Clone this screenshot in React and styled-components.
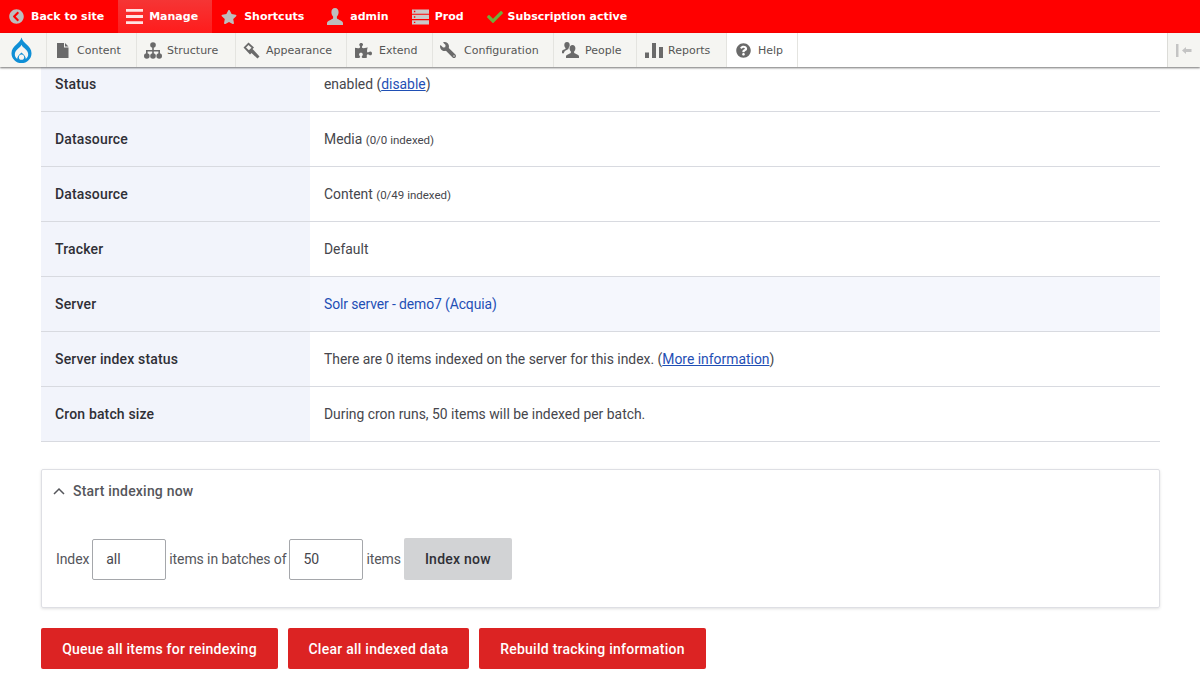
import React from 'react';
import styled, { createGlobalStyle } from 'styled-components';
import { FaStar, FaCheck, FaPuzzlePiece, FaWrench, FaQuestionCircle, FaChevronCircleLeft } from 'react-icons/fa';

const GlobalStyle = createGlobalStyle`
    html, body {
        margin: 0;
        padding: 0;
        height: 685px;
        overflow: hidden;
        background: #fff;
    }
    body {
        font-family: Roboto, "Noto Sans", sans-serif;
        color: #4a4a4f;
    }
    * {
        box-sizing: border-box;
    }
`;

const Header = styled.header`
    position: relative;
    z-index: 2;
`;

const TopBar = styled.nav`
    display: flex;
    height: 33px;
    background: #ff0000;
    font-family: "DejaVu Sans", sans-serif;
    font-size: 11px;
    font-weight: 700;
    color: #fff;
`;

const TopItem = styled.div`
    display: flex;
    align-items: center;
    gap: ${(p) => p.$gap || 7}px;
    padding: 0 14px 0 ${(p) => p.$left || 9}px;
    background: ${(p) => (p.$active ? 'linear-gradient(#f53535, #ff1c1c)' : 'transparent')};
    white-space: nowrap;
    svg {
        flex: none;
        color: #bdbdbd;
    }
`;

const MenuBar = styled.nav`
    display: flex;
    align-items: stretch;
    height: 34px;
    background: #fff;
    font-family: "DejaVu Sans", sans-serif;
    font-size: 11px;
    color: #555;
    box-shadow: 0 1px 2px rgba(0, 0, 0, 0.55);
`;

const LogoCell = styled.div`
    display: flex;
    align-items: center;
    justify-content: center;
    width: 47px;
    padding-right: 4px;
    background: #f5f5f2;
    border-right: 1px solid #e4e4e0;
`;

const MenuItem = styled.div`
    display: flex;
    align-items: center;
    gap: ${(p) => p.$gap || 6}px;
    width: ${(p) => p.$width}px;
    padding-left: ${(p) => p.$left || 7}px;
    background: ${(p) => (p.$plain ? '#fff' : '#f5f5f2')};
    border-right: 1px solid #e4e4e0;
    white-space: nowrap;
    svg {
        flex: none;
        color: #6a6a6a;
    }
`;

const MirroredWrench = styled(FaWrench)`
    transform: scaleX(-1);
`;

const MenuSpacer = styled.div`
    flex: 1;
`;

const CollapseCell = styled.div`
    display: flex;
    align-items: center;
    justify-content: center;
    width: 33px;
    background: #f5f5f2;
    border-left: 1px solid #dcdcd8;
`;

const Main = styled.main`
    margin-top: -10px;
    padding: 0 40px 0 41px;
`;

const Table = styled.div`
    display: flex;
    flex-direction: column;
    margin-bottom: 27px;
`;

const Row = styled.div`
    display: flex;
    height: 55px;
    border-bottom: 1px solid #d8dae0;
    background: ${(p) => (p.$tinted ? '#f5f7fd' : '#fff')};
    font-size: 14px;
    line-height: 54px;
`;

const RowLabel = styled.div`
    width: 269px;
    padding-left: 14px;
    background: #f2f4fb;
    font-weight: 500;
    letter-spacing: 0.15px;
    color: #2f2f36;
`;

const RowValue = styled.div`
    flex: 1;
    padding-left: 14px;
    font-size: 13.9px;
    color: #46464c;
`;

const Small = styled.small`
    font-size: 11.5px;
`;

const Link = styled.a`
    color: #1f4fb5;
    text-decoration: ${(p) => (p.$plain ? 'none' : 'underline')};
    letter-spacing: ${(p) => (p.$plain ? '-0.1px' : '0')};
`;

const Details = styled.section`
    height: 139px;
    margin-bottom: 20px;
    border: 1px solid #dedfe4;
    border-radius: 2px;
    box-shadow: 0 1px 3px rgba(0, 0, 0, 0.12);
`;

const Summary = styled.div`
    display: flex;
    align-items: center;
    gap: 8px;
    height: 42px;
    padding-left: 11px;
    font-size: 14px;
    font-weight: 500;
    letter-spacing: 0.2px;
    color: #55565b;
`;

const IndexForm = styled.div`
    display: flex;
    align-items: center;
    gap: 3px;
    margin-top: 26px;
    padding-left: 14px;
    font-size: 14px;
    letter-spacing: -0.1px;
    color: #55565b;
`;

const NumberInput = styled.div`
    display: flex;
    align-items: center;
    width: 74px;
    height: 41px;
    padding-left: 13px;
    border: 1px solid #a5a7ab;
    border-radius: 2px;
    color: #46464c;
`;

const GreyButton = styled.div`
    display: flex;
    align-items: center;
    justify-content: center;
    width: 108px;
    height: 42px;
    background: #d2d3d5;
    border-radius: 2px;
    font-size: 14px;
    font-weight: 500;
    letter-spacing: 0.25px;
    color: #2f2f36;
`;

const Actions = styled.div`
    display: flex;
    gap: 10px;
`;

const RedButton = styled.div`
    display: flex;
    align-items: center;
    justify-content: center;
    width: ${(p) => p.$width}px;
    height: 41px;
    background: #dc2323;
    border-radius: 2px;
    font-size: 14px;
    font-weight: 500;
    letter-spacing: 0.25px;
    color: #fff;
`;

const BarsIcon = () => (
    <svg width="17" height="17" viewBox="0 0 18 17">
        <path d="M0 0.5h18v3H0zM0 7h18v3H0zM0 13.500h18v3H0z" fill="#ffe3e3" />
    </svg>
);

const UserIcon = () => (
    <svg width="16" height="17" viewBox="0 0 16 17">
        <path d="M8 0c2.400 0 3.600 1.800 3.600 4.200 0 1.800-.8 3.400-1.700 4.400v1.500c0 .8 1 1.100 2.600 1.800 1.700.7 3.500 1.300 3.500 3V17H0v-2.100c0-1.700 1.800-2.300 3.500-3 1.600-.7 2.600-1 2.600-1.800V8.600C5.200 7.600 4.400 6 4.400 4.200 4.400 1.800 5.600 0 8 0z" fill="currentColor" />
    </svg>
);

const ServerIcon = () => (
    <svg width="17" height="16" viewBox="0 0 18 16">
        <path d="M0 0h18v4.500H0zM0 5.700h18v4.500H0zM0 11.400h18V16H0z" fill="#c9c9c9" />
        <path d="M2 1.500h1.500v1.500H2zM2 7.200h1.500v1.500H2zM2 12.900h1.500v1.500H2z" fill="#ff0000" />
    </svg>
);

const DrupalLogo = () => (
    <svg width="21" height="27" viewBox="0 0 22 27">
        <path d="M11 0c1 3.600 3.200 5.300 5.400 7.300C19 9.600 21.500 12.400 21.500 16.300 21.500 22.200 16.800 26.700 11 26.700S.5 22.200.5 16.300C.5 12.400 3 9.600 5.600 7.300 7.800 5.300 10 3.600 11 0z" fill="#0f8fd6" />
        <path d="M11 7.500c.8 1.800 2.200 2.900 3.700 4.200 1.900 1.700 3.300 3.400 3.300 5.800 0 2-1 3.800-2.500 5-.1-2.100-1.200-3.600-2.600-5L11 15.600l-1.900 1.900c-1.400 1.400-2.500 2.900-2.600 5C5 21.300 4 19.500 4 17.500c0-2.400 1.400-4.100 3.300-5.800C8.800 10.400 10.200 9.300 11 7.500z" fill="#f5f5f2" />
        <circle cx="11" cy="20.500" r="2.700" fill="#f5f5f2" />
    </svg>
);

const FileIcon = () => (
    <svg width="12" height="15" viewBox="0 0 12 15">
        <path d="M0 0h7v4.500h4.500V15H0zM8 0l3.500 3.500H8z" fill="currentColor" />
    </svg>
);

const StructureIcon = () => (
    <svg width="18" height="17" viewBox="0 0 18 17">
        <circle cx="9" cy="3" r="2.800" fill="currentColor" />
        <circle cx="2.800" cy="14" r="2.800" fill="currentColor" />
        <circle cx="9" cy="14" r="2.800" fill="currentColor" />
        <circle cx="15.200" cy="14" r="2.800" fill="currentColor" />
        <path d="M8.200 3h1.600v5h6.200v6h-1.600V9.600H9.800V14H8.200V9.600H3.600V14H2V8h6.200z" fill="currentColor" />
    </svg>
);

const BrushIcon = () => (
    <svg width="17" height="17" viewBox="0 0 17 17">
        <path d="M0.500 5.500L5.500 0.500l5.500 5-1.500 1.500L11 8.500l5.500 6-2 2-6-5.500-1.500 1.500z" fill="currentColor" />
        <path d="M3 5.500L5.500 3l3 2.700-2.600 2.500z" fill="#f5f5f2" />
    </svg>
);

const PeopleIcon = () => (
    <svg width="17" height="16" viewBox="0 0 17 16">
        <path d="M5 0c1.700 0 2.700 1.300 2.700 3 0 1.300-.6 2.400-1.200 3.100v1c-.8.500-2 1-2.800 1.500C2.600 9.300 2 10 2 11.300H0V9.500C0 8 1.500 7.800 3.500 7V6.100C2.900 5.400 2.300 4.300 2.300 3 2.300 1.300 3.300 0 5 0z" fill="currentColor" />
        <path d="M10.500 3c1.800 0 2.900 1.400 2.900 3.200 0 1.400-.6 2.600-1.300 3.300v1.100c0 .6.700.8 2 1.300 1.400.6 2.900 1 2.900 2.300V16H4v-1.800c0-1.300 1.500-1.700 2.900-2.300 1.300-.5 2-.7 2-1.300V9.500C8.200 8.800 7.600 7.600 7.600 6.200 7.600 4.400 8.700 3 10.500 3z" fill="currentColor" />
    </svg>
);

const ReportsIcon = () => (
    <svg width="18" height="15" viewBox="0 0 18 15">
        <path d="M0 9.500h4V15H0zM7 0h4v15H7zM14 4h4v11h-4z" fill="currentColor" />
    </svg>
);

const CollapseIcon = () => (
    <svg width="16" height="13" viewBox="0 0 16 13">
        <path d="M0 0h2.500v13H0z" fill="#c4c4c4" />
        <path d="M6 6.500L10 3v2h5.500v3H10v2z" fill="#c4c4c4" />
    </svg>
);

const ChevronUp = () => (
    <svg width="12" height="8" viewBox="0 0 12 8">
        <path d="M1 7L6 2l5 5" fill="none" stroke="#55565b" strokeWidth="1.500" />
    </svg>
);

const rows = [
    { label: 'Status', value: <>enabled (<Link>disable</Link>)</> },
    { label: 'Datasource', value: <>Media <Small>(0/0 indexed)</Small></> },
    { label: 'Datasource', value: <>Content <Small>(0/49 indexed)</Small></> },
    { label: 'Tracker', value: 'Default' },
    { label: 'Server', value: <Link $plain>Solr server - demo7 (Acquia)</Link>, tinted: true },
    { label: 'Server index status', value: <>There are 0 items indexed on the server for this index. (<Link>More information</Link>)</> },
    { label: 'Cron batch size', value: 'During cron runs, 50 items will be indexed per batch.' }
];

export default function App() {
    return (
        <>
            <GlobalStyle />
            <Header>
                <TopBar>
                    <TopItem><FaChevronCircleLeft size={15} />Back to site</TopItem>
                    <TopItem $active $left={8} $gap={6}><BarsIcon />Manage</TopItem>
                    <TopItem><FaStar size={16} />Shortcuts</TopItem>
                    <TopItem><UserIcon />admin</TopItem>
                    <TopItem $gap={6}><ServerIcon />Prod</TopItem>
                    <TopItem $gap={5}><FaCheck size={16} style={{ color: '#6fae3a' }} />Subscription active</TopItem>
                </TopBar>
                <MenuBar>
                    <LogoCell><DrupalLogo /></LogoCell>
                    <MenuItem $width={90} $left={10} $gap={8}><FileIcon />Content</MenuItem>
                    <MenuItem $width={99} $left={7} $gap={5}><StructureIcon />Structure</MenuItem>
                    <MenuItem $width={111} $left={7}><BrushIcon />Appearance</MenuItem>
                    <MenuItem $width={86} $left={8} $gap={7}><FaPuzzlePiece size={17} />Extend</MenuItem>
                    <MenuItem $width={121} $left={7} $gap={8}><MirroredWrench size={16} />Configuration</MenuItem>
                    <MenuItem $width={83} $left={8} $gap={6}><PeopleIcon />People</MenuItem>
                    <MenuItem $width={90} $left={8} $gap={5}><ReportsIcon />Reports</MenuItem>
                    <MenuItem $width={71} $left={9} $gap={7} $plain><FaQuestionCircle size={15} />Help</MenuItem>
                    <MenuSpacer />
                    <CollapseCell><CollapseIcon /></CollapseCell>
                </MenuBar>
            </Header>
            <Main>
                <Table>
                    {rows.map((row, i) => (
                        <Row key={i} $tinted={row.tinted}>
                            <RowLabel>{row.label}</RowLabel>
                            <RowValue>{row.value}</RowValue>
                        </Row>
                    ))}
                </Table>
                <Details>
                    <Summary><ChevronUp />Start indexing now</Summary>
                    <IndexForm>
                        Index
                        <NumberInput>all</NumberInput>
                        items in batches of
                        <NumberInput>50</NumberInput>
                        items
                        <GreyButton>Index now</GreyButton>
                    </IndexForm>
                </Details>
                <Actions>
                    <RedButton $width={237}>Queue all items for reindexing</RedButton>
                    <RedButton $width={181}>Clear all indexed data</RedButton>
                    <RedButton $width={227}>Rebuild tracking information</RedButton>
                </Actions>
            </Main>
        </>
    );
}
